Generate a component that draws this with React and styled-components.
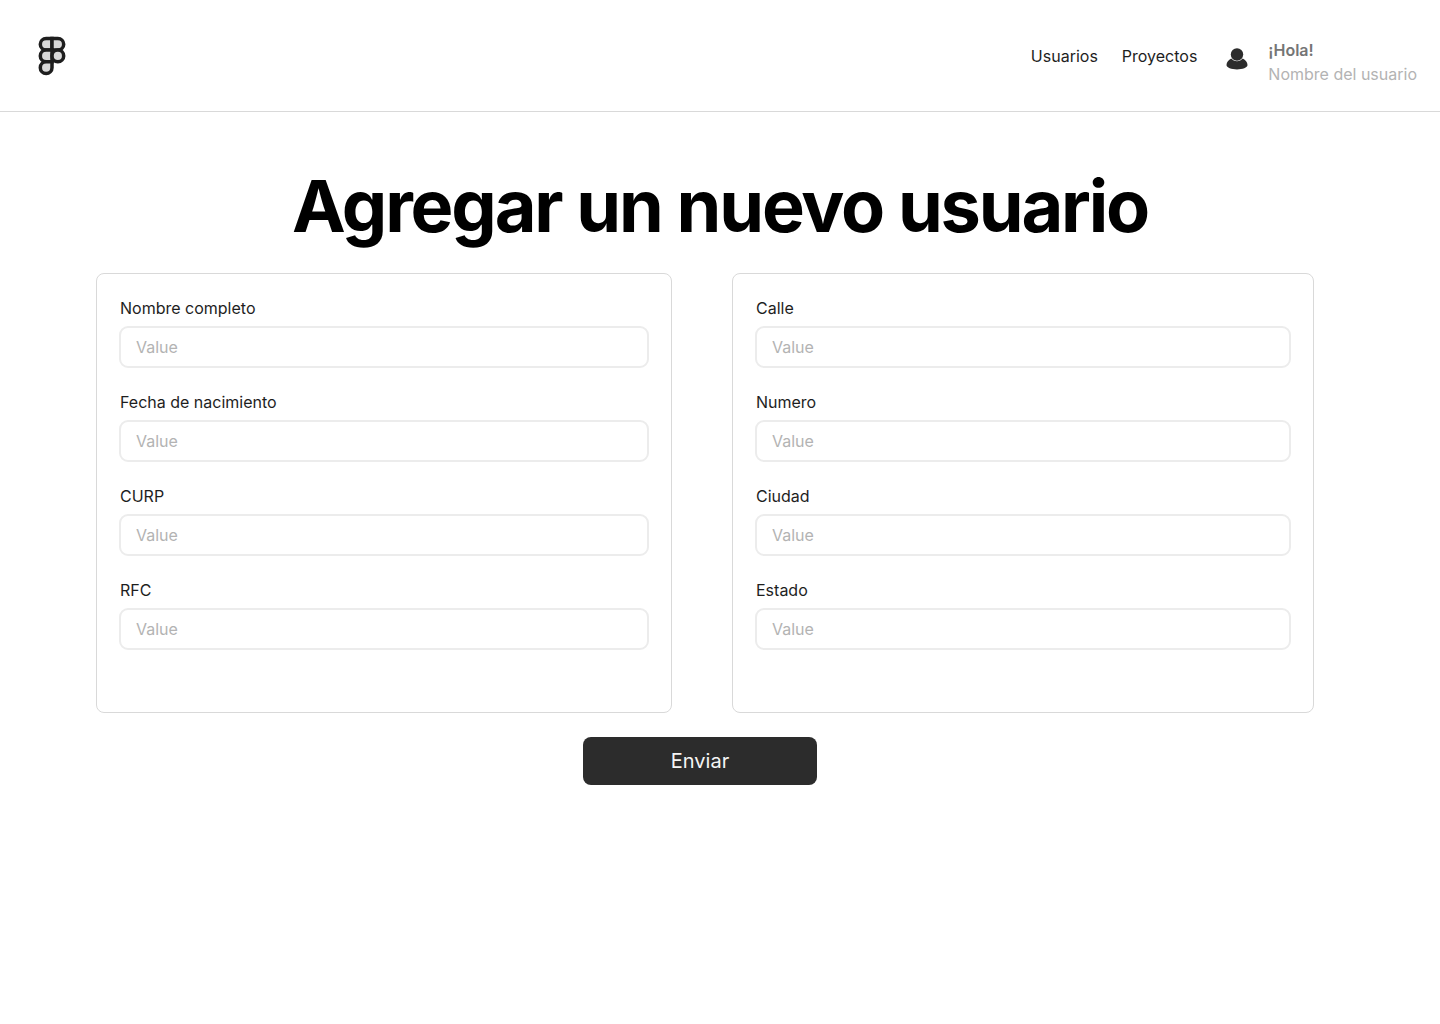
import React from "react";
import styled, { createGlobalStyle } from "styled-components";

const GlobalStyle = createGlobalStyle`
  *, *::before, *::after { box-sizing: border-box; }
  body {
    margin: 0;
    background: #ffffff;
    color: #1e1e1e;
    font-family: Inter, "Liberation Sans", sans-serif;
    font-size: 16px;
    line-height: 24px;
  }
`;

const Header = styled.header`
  display: flex;
  align-items: flex-start;
  justify-content: space-between;
  padding: 36px 23px 24px 38px;
  border-bottom: 1px solid #d9d9d9;
`;

const HomeLink = styled.a`
  display: block;
  height: 40px;
`;

const HeaderRight = styled.div`
  display: flex;
  gap: 29px;
  height: 51px;
  padding-top: 2px;
`;

const Nav = styled.nav`
  display: flex;
  gap: 24px;
  padding-top: 6px;
`;

const NavLink = styled.a`
  height: 24px;
  color: #1e1e1e;
  text-decoration: none;
`;

const User = styled.div`
  display: flex;
  gap: 20px;

  svg {
    margin-top: 9px;
  }
`;

const Greeting = styled.div`
  color: #b3b3b3;

  strong {
    display: block;
    color: #757575;
    font-weight: 600;
  }
`;

const Title = styled.h1`
  margin: 51px 24px 24px;
  color: #000000;
  font-size: 72px;
  font-weight: 700;
  line-height: 86px;
  letter-spacing: -0.03em;
  text-align: center;
`;

const Cards = styled.div`
  display: grid;
  grid-template-columns: 576fr 582fr;
  gap: 60px;
  padding: 0 126px 0 96px;
`;

const Card = styled.section`
  display: flex;
  flex-direction: column;
  gap: 23px;
  padding: 23px 22px 62px;
  border: 1px solid #d9d9d9;
  border-radius: 8px;
`;

const FieldBox = styled.div`
  display: flex;
  flex-direction: column;
  gap: 7px;
`;

const Label = styled.label`
  padding-left: 1px;
  line-height: 22px;
`;

const Input = styled.input`
  width: 100%;
  height: 42px;
  padding: 0 15px;
  border: 2px solid #ececec;
  border-radius: 9px;
  background: #ffffff;
  color: #1e1e1e;
  font: inherit;

  &::placeholder {
    color: #b3b3b3;
    opacity: 1;
  }
`;

const Actions = styled.div`
  display: flex;
  justify-content: center;
  padding: 24px 40px 24px 0;
`;

const SubmitButton = styled.button`
  width: 234px;
  height: 48px;
  padding: 0;
  border: 0;
  border-radius: 8px;
  background: #2c2c2c;
  color: #f5f5f5;
  font-family: inherit;
  font-size: 20px;
  cursor: pointer;
`;

function Logo() {
  return (
    <svg width="28" height="40" viewBox="0 0 28 40" fill="#d9d9d9" stroke="#1e1e1e" strokeWidth="3.5" aria-hidden="true">
      <path d="M14 2.4H8.15a5.85 5.85 0 0 0 0 11.7H14z" />
      <path d="M14 2.4h5.85a5.85 5.85 0 0 1 0 11.7H14z" />
      <path d="M14 14.1H8.15a5.85 5.85 0 0 0 0 11.7H14z" />
      <circle cx="19.85" cy="19.95" r="5.85" />
      <path d="M14 25.8H8.15a5.85 5.85 0 1 0 5.85 5.85z" />
    </svg>
  );
}

function UserIcon() {
  return (
    <svg width="22" height="24" viewBox="0 0 22 24" fill="#2c2c2c" aria-hidden="true">
      <path d="M5.2 11.6C2.6 12.900.5 15.700.5 18c0 2.500 5 4.400 10.500 4.400s10.500-1.900 10.500-4.400c0-2.300-2.100-5.100-4.700-6.400-1.400 1.700-3.400 2.600-5.800 2.600s-4.400-.9-5.800-2.600z" />
      <circle cx="11" cy="7.500" r="6.200" />
    </svg>
  );
}

function Field({ id, label }) {
  return (
    <FieldBox>
      <Label htmlFor={id}>{label}</Label>
      <Input id={id} name={id} type="text" placeholder="Value" />
    </FieldBox>
  );
}

const personal = [
  ["nombre", "Nombre completo"],
  ["nacimiento", "Fecha de nacimiento"],
  ["curp", "CURP"],
  ["rfc", "RFC"],
];

const address = [
  ["calle", "Calle"],
  ["numero", "Numero"],
  ["ciudad", "Ciudad"],
  ["estado", "Estado"],
];

export default function App() {
  return (
    <>
      <GlobalStyle />
      <Header>
        <HomeLink href="#" aria-label="Inicio">
          <Logo />
        </HomeLink>
        <HeaderRight>
          <Nav>
            <NavLink href="#usuarios">Usuarios</NavLink>
            <NavLink href="#proyectos">Proyectos</NavLink>
          </Nav>
          <User>
            <UserIcon />
            <Greeting>
              <strong>¡Hola!</strong>
              Nombre del usuario
            </Greeting>
          </User>
        </HeaderRight>
      </Header>
      <main>
        <Title>Agregar un nuevo usuario</Title>
        <form onSubmit={(event) => event.preventDefault()}>
          <Cards>
            {[personal, address].map((fields) => (
              <Card key={fields[0][0]}>
                {fields.map(([id, label]) => (
                  <Field key={id} id={id} label={label} />
                ))}
              </Card>
            ))}
          </Cards>
          <Actions>
            <SubmitButton type="submit">Enviar</SubmitButton>
          </Actions>
        </form>
      </main>
    </>
  );
}
